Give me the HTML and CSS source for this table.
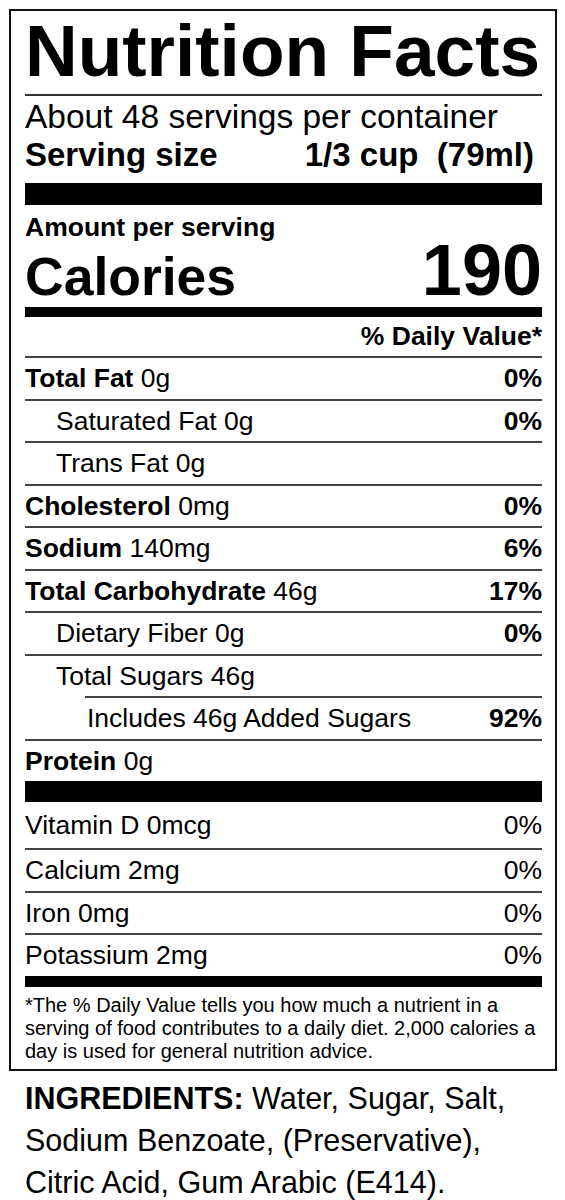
FILE: index.html
```html
<!DOCTYPE html>
<html lang="en">
<head>
    <meta charset="UTF-8">
    <meta name="viewport" content="width=device-width, initial-scale=1.0">
    <title>Nutrition Facts</title>
    <link rel="stylesheet" href="styles.css">
</head>
<body>

    <div class="label">
        <h1 class="title">Nutrition Facts</h1>

        <p class="per-container">About 48 servings per container</p>
        <p class="serving-size"><span>Serving size</span><span>1/3 cup&nbsp; (79ml)</span></p>

        <div class="bar bar-thick"></div>

        <p class="amount">Amount per serving</p>
        <p class="calories"><span class="calories-label">Calories</span><span class="calories-value">190</span></p>

        <div class="bar bar-medium"></div>

        <p class="dv-header">% Daily Value*</p>

        <ul class="nutrients">
            <li class="row"><span><b>Total Fat</b> 0g</span><b>0%</b></li>
            <li class="row sub"><span>Saturated Fat 0g</span><b>0%</b></li>
            <li class="row sub"><span>Trans Fat 0g</span></li>
            <li class="row"><span><b>Cholesterol</b> 0mg</span><b>0%</b></li>
            <li class="row"><span><b>Sodium</b> 140mg</span><b>6%</b></li>
            <li class="row"><span><b>Total Carbohydrate</b> 46g</span><b>17%</b></li>
            <li class="row sub"><span>Dietary Fiber 0g</span><b>0%</b></li>
            <li class="row sub"><span>Total Sugars 46g</span></li>
            <li class="row added"><span>Includes 46g Added Sugars</span><b>92%</b></li>
            <li class="row"><span><b>Protein</b> 0g</span></li>
        </ul>

        <div class="bar bar-thick"></div>

        <ul class="vitamins">
            <li class="row"><span>Vitamin D 0mcg</span><span>0%</span></li>
            <li class="row"><span>Calcium 2mg</span><span>0%</span></li>
            <li class="row"><span>Iron 0mg</span><span>0%</span></li>
            <li class="row"><span>Potassium 2mg</span><span>0%</span></li>
        </ul>

        <div class="bar bar-bottom"></div>

        <p class="footnote">*The % Daily Value tells you how much a nutrient in a serving of food contributes to a daily diet. 2,000 calories a day is used for general nutrition advice.</p>
    </div>

    <p class="ingredients"><b>INGREDIENTS:</b> Water, Sugar, Salt, Sodium Benzoate, (Preservative), Citric Acid, Gum Arabic (E414).</p>

</body>
</html>
```

FILE: styles.css
```css
body {
    font-family: "Liberation Sans", Arial, sans-serif;
    margin: 0;
    background: white;
    color: #000;
}

p, ul, h1 {
    margin: 0;
    padding: 0;
}

.label {
    box-sizing: border-box;
    width: 548px;
    margin: 9px 0 0 9px;
    padding: 0 13px 0 14px;
    border: 2px solid #111;
}

.title {
    font-size: 73px;
    font-weight: bold;
    line-height: 73px;
    white-space: nowrap;
    padding: 3px 0 7px;
    border-bottom: 2px solid #333;
}

.per-container {
    font-size: 33.5px;
    line-height: 38px;
    margin-top: 2px;
}

.serving-size {
    display: flex;
    justify-content: space-between;
    font-size: 33px;
    font-weight: bold;
    line-height: 38px;
    padding-right: 8px;
}

.bar {
    background: #000;
}

.bar-thick {
    height: 22px;
    margin-top: 9px;
}

.nutrients + .bar-thick {
    height: 21px;
    margin-top: 0;
}

.bar-medium {
    height: 10px;
    margin-top: 8px;
}

.bar-bottom {
    height: 11px;
}

.amount {
    font-size: 26.5px;
    font-weight: bold;
    line-height: 28px;
    margin-top: 8px;
}

.calories {
    display: flex;
    justify-content: space-between;
    align-items: baseline;
    height: 58px;
    line-height: 58px;
    font-weight: bold;
}

.calories-label {
    font-size: 53.5px;
}

.calories-value {
    font-size: 72px;
}

.dv-header {
    font-size: 26.5px;
    font-weight: bold;
    line-height: 39px;
    text-align: right;
}

.nutrients, .vitamins {
    list-style: none;
}

.row {
    display: flex;
    justify-content: space-between;
    font-size: 26.5px;
    line-height: 40.5px;
    border-top: 2px solid #444;
}

.sub {
    padding-left: 31px;
}

.added {
    margin-left: 60px;
    padding-left: 2px;
}

.vitamins .row:first-child {
    border-top: none;
    line-height: 46px;
}

.footnote {
    font-size: 20px;
    line-height: 23px;
    margin-top: 7px;
    padding-bottom: 6.5px;
}

.ingredients {
    font-size: 30.5px;
    line-height: 42px;
    margin-top: 6px;
    padding: 0 23px 0 25px;
}
```
